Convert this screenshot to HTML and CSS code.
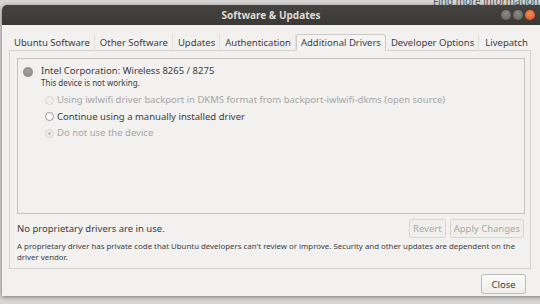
FILE: index.html
```html
<!DOCTYPE html>
<html>
<head>
<meta charset="utf-8">
<link rel="stylesheet" href="styles.css">
</head>
<body>
<div class="desktop">
  <div class="bgwin">Find more information about</div>
  <div class="window">
    <div class="titlebar">
      <span class="title">Software &amp; Updates</span>
      <div class="controls">
        <span class="ctl ctl-min"></span>
        <span class="ctl ctl-max"></span>
        <span class="ctl ctl-close"></span>
      </div>
    </div>
    <div class="body">
      <div class="tabs">
        <div class="tab">Ubuntu Software</div>
        <div class="tab">Other Software</div>
        <div class="tab">Updates</div>
        <div class="tab">Authentication</div>
        <div class="tab active">Additional Drivers</div>
        <div class="tab">Developer Options</div>
        <div class="tab">Livepatch</div>
      </div>
      <div class="page">
        <div class="tree">
          <div class="device">
            <span class="devicon"></span>
            <div class="devtext">
              <div class="devname">Intel Corporation: Wireless 8265 / 8275</div>
              <div class="devstatus">This device is not working.</div>
            </div>
          </div>
          <div class="opts">
            <div class="opt disabled"><span class="radio"></span>Using iwlwifi driver backport in DKMS format from backport-iwlwifi-dkms (open source)</div>
            <div class="opt"><span class="radio"></span>Continue using a manually installed driver</div>
            <div class="opt disabled"><span class="radio checked"></span>Do not use the device</div>
          </div>
        </div>
        <div class="status">
          <span class="statustext">No proprietary drivers are in use.</span>
          <div class="btns">
            <span class="btn off">Revert</span>
            <span class="btn off">Apply Changes</span>
          </div>
        </div>
        <p class="note">A proprietary driver has private code that Ubuntu developers can't review or improve. Security and other updates are dependent on the driver vendor.</p>
      </div>
      <div class="footer">
        <span class="btn close">Close</span>
      </div>
    </div>
  </div>
</div>
</body>
</html>
```
FILE: styles.css
```css
html, body {
  margin: 0;
  padding: 0;
}
body {
  width: 540px;
  height: 304px;
  overflow: hidden;
  font-family: "Noto Sans", "Open Sans", sans-serif;
}
.desktop {
  position: relative;
  width: 540px;
  height: 304px;
  background: #d6d5d3;
  overflow: hidden;
  padding-top: 5px;
  padding-left: 2px;
  box-sizing: border-box;
}
.bgwin {
  position: absolute;
  left: 433px;
  top: -4px;
  font-size: 10px;
  line-height: 10px;
  color: #555;
  white-space: nowrap;
}
.window {
  position: relative;
  width: 545px;
  height: 291px;
  background: #f2f1f0;
  border-radius: 5px 5px 0 0;
  box-shadow: 0 1px 4px rgba(0,0,0,0.45);
  display: flex;
  flex-direction: column;
}
.titlebar {
  height: 20px;
  flex: none;
  background: linear-gradient(#44433f, #3a3935);
  border-radius: 5px 5px 0 0;
  display: flex;
  align-items: center;
  justify-content: center;
  position: relative;
}
.title {
  color: #dfdbd2;
  font-weight: bold;
  font-size: 10px;
  margin-left: -7px;
}
.controls {
  position: absolute;
  right: 12px;
  top: 5px;
  display: flex;
  gap: 2px;
}
.ctl {
  width: 10px;
  height: 10px;
  border-radius: 50%;
  background: radial-gradient(circle at 50% 35%, #8a8985, #5f5e5a);
}
.ctl-close {
  background: radial-gradient(circle at 50% 35%, #f38a5c, #d9531e);
}
.body {
  flex: 1;
  padding: 9px 10px 0 7px;
  display: flex;
  flex-direction: column;
}
.tabs {
  display: flex;
  height: 17px;
  align-items: stretch;
  font-size: 9.5px;
  color: #3c3c3c;
  position: relative;
  z-index: 1;
}
.tab {
  padding: 0 4px 0 5px;
  display: flex;
  align-items: center;
  border-right: 1px solid #e2e0dd;
}
.tab.active {
  border: 1px solid #cdcac5;
  border-bottom-color: #f2f1f0;
  border-radius: 3px 3px 0 0;
  background: #f5f4f3;
  margin-left: 0;
  padding: 0 4px 0 4px;
}
.tab:last-child {
  border-right: none;
  padding-left: 6px;
}
.page {
  margin-top: -1px;
  border: 1px solid #d3d1cd;
  width: 522px;
  height: 219px;
  box-sizing: border-box;
  padding: 7px 5px 0 7px;
  display: flex;
  flex-direction: column;
}
.tree {
  border: 1px solid #c6c3be;
  height: 156px;
  box-sizing: border-box;
  padding: 5px 0 0 5px;
  color: #3c3c3c;
}
.device {
  display: flex;
  align-items: flex-start;
}
.devicon {
  width: 10px;
  height: 10px;
  border-radius: 50%;
  background: radial-gradient(circle at 50% 40%, #a6a5a2, #7d7c79);
  margin-top: 3px;
  margin-right: 8px;
}
.devname {
  font-size: 9.5px;
  line-height: 13px;
}
.devstatus {
  font-size: 8px;
  line-height: 12px;
}
.opts {
  margin-top: 3px;
}
.opt {
  font-size: 9.5px;
  line-height: 16.5px;
  padding-left: 22px;
  display: flex;
  align-items: center;
}
.opt.disabled {
  color: #a7a6a3;
}
.radio {
  width: 7px;
  height: 7px;
  border: 1px solid #9a9894;
  border-radius: 50%;
  background: #fff;
  margin-right: 3px;
  position: relative;
}
.opt.disabled .radio {
  border-color: #d5d3cf;
  background: #f0efee;
}
.radio.checked::after {
  content: "";
  position: absolute;
  left: 2px;
  top: 2px;
  width: 3px;
  height: 3px;
  border-radius: 50%;
  background: #bcbab6;
}
.status {
  display: flex;
  align-items: center;
  justify-content: space-between;
  margin-top: 4px;
  height: 20px;
}
.statustext {
  font-size: 9.5px;
  color: #3c3c3c;
}
.btns {
  display: flex;
  gap: 4px;
  margin-right: 1px;
}
.btn {
  display: inline-flex;
  align-items: center;
  justify-content: center;
  height: 19px;
  box-sizing: border-box;
  padding: 0 3px;
  border: 1px solid #c9c6c1;
  border-radius: 3px;
  font-size: 9.5px;
  background: linear-gradient(#f7f6f5, #edebe9);
  color: #3c3c3c;
}
.btn.off {
  color: #aaa8a5;
  border-color: #d7d5d1;
  background: #f0efed;
}
.note {
  margin: 3px 0 0 0;
  font-size: 7.85px;
  line-height: 11px;
  color: #3c3c3c;
}
.footer {
  display: flex;
  justify-content: flex-end;
  width: 517px;
  margin-top: 5px;
}
.close {
  width: 45px;
  height: 20px;
  background: linear-gradient(#fbfbfa, #efeeec);
  border-color: #bebbb6;
}
```
